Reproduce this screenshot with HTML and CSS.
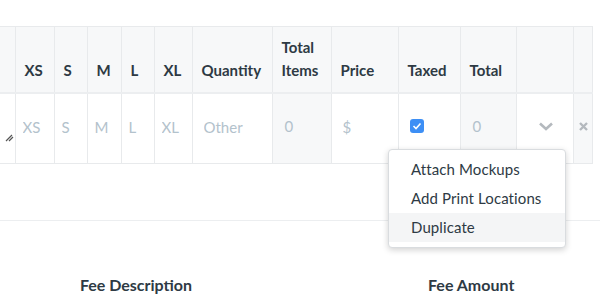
FILE: index.html
```html
<!DOCTYPE html>
<html lang="en">
<head>
  <meta charset="UTF-8" />
  <title>Line Items</title>
  <link rel="stylesheet" href="styles.css">
</head>
<body>
  <div class="items">
    <table class="grid">
      <colgroup>
        <col style="width:15px"><col style="width:39px"><col style="width:33px"><col style="width:34px">
        <col style="width:33px"><col style="width:38px"><col style="width:80px"><col style="width:59px">
        <col style="width:67px"><col style="width:62px"><col style="width:56px"><col style="width:57px">
        <col style="width:19px">
      </colgroup>
      <thead>
        <tr>
          <th></th>
          <th>XS</th>
          <th>S</th>
          <th>M</th>
          <th>L</th>
          <th>XL</th>
          <th>Quantity</th>
          <th>Total<br>Items</th>
          <th>Price</th>
          <th>Taxed</th>
          <th>Total</th>
          <th></th>
          <th></th>
        </tr>
      </thead>
      <tbody>
        <tr>
          <td class="grip">
            <svg width="9" height="8" viewBox="0 0 9 8"><path d="M1 7 L7 1 M4 7 L8 3" stroke="#555" stroke-width="1.2" fill="none"/></svg>
          </td>
          <td><input placeholder="XS"></td>
          <td><input placeholder="S"></td>
          <td><input placeholder="M"></td>
          <td><input placeholder="L"></td>
          <td><input placeholder="XL"></td>
          <td><input class="wide" placeholder="Other"></td>
          <td class="calc">0</td>
          <td><input class="wide" placeholder="$"></td>
          <td class="check">
            <span class="box">
              <svg width="10" height="8" viewBox="0 0 10 8"><path d="M1.5 4 L4 6.5 L8.5 1.5" stroke="#fff" stroke-width="1.6" fill="none"/></svg>
            </span>
          </td>
          <td class="calc">0</td>
          <td class="action">
            <svg width="16" height="9" viewBox="0 0 16 9"><path d="M2 1.5 L8 7 L14 1.5" stroke="#b4b9be" stroke-width="2.6" fill="none"/></svg>
          </td>
          <td class="calc remove">
            <svg width="9" height="9" viewBox="0 0 9 9"><path d="M1 1 L8 8 M8 1 L1 8" stroke="#b4b9be" stroke-width="2.4" fill="none"/></svg>
          </td>
        </tr>
      </tbody>
    </table>

    <div class="menu">
      <div class="menu-item">Attach Mockups</div>
      <div class="menu-item">Add Print Locations</div>
      <div class="menu-item hover">Duplicate</div>
    </div>
  </div>

  <div class="fees">
    <div class="fee-head">
      <span class="fee-desc">Fee Description</span>
      <span class="fee-amt">Fee Amount</span>
    </div>
  </div>
</body>
</html>
```

FILE: styles.css
```css
* {
  box-sizing: border-box;
}

body {
  margin: 0;
  padding: 0;
  background: #fff;
  font-family: Lato, 'Open Sans', sans-serif;
  color: #2e3a44;
  overflow: hidden;
}

.items {
  position: relative;
  padding-top: 26px;
  height: 221px;
  border-bottom: 1px solid #eceef0;
}

.grid {
  border-collapse: collapse;
  table-layout: fixed;
  width: 592px;
}

.grid th,
.grid td {
  border: 1px solid #e8eaec;
  padding: 0;
}

.grid tr > :first-child {
  border-left: none;
}

.grid th {
  background: #f7f8f9;
  height: 66px;
  vertical-align: bottom;
  text-align: left;
  padding: 0 0 10px 9px;
  font-size: 15px;
  font-weight: 700;
  line-height: 23px;
  white-space: nowrap;
  border-bottom: 2px solid #eceef0;
}

.grid td {
  height: 71px;
  vertical-align: middle;
  background: #fff;
  padding-bottom: 4px;
}

.grid input {
  width: 100%;
  border: none;
  outline: none;
  background: transparent;
  font-family: inherit;
  font-size: 15px;
  padding: 0 0 0 7px;
  color: #2e3a44;
}

.grid input.wide {
  padding-left: 11px;
}

.grid input::placeholder {
  color: #b3c2cc;
}

.grid td.calc {
  background: #f7f8f9;
  color: #b3c2cc;
  font-size: 15px;
  padding-left: 12px;
}

.grid td.grip {
  vertical-align: bottom;
  padding: 0 0 21px 5px;
}

.grid td.grip svg,
.grid td.action svg,
.grid td.remove svg {
  display: block;
}

.check {
  padding-left: 11px !important;
}

.box {
  display: flex;
  align-items: center;
  justify-content: center;
  width: 14px;
  height: 14px;
  border-radius: 3px;
  background: #3d8ff5;
}

.grid td.action {
  padding-left: 21px;
}

.grid td.remove {
  padding-left: 5px;
}

.menu {
  position: absolute;
  left: 388px;
  top: 149px;
  width: 178px;
  background: #fff;
  border: 1px solid #d9dcdf;
  border-radius: 4px;
  box-shadow: 0 2px 6px rgba(0,0,0,0.18);
  padding: 5px 0 5px;
}

.menu-item {
  font-size: 15px;
  line-height: 29px;
  padding-left: 22px;
  color: #2e3a44;
  letter-spacing: 0.1px;
}

.menu-item.hover {
  background: #f4f5f6;
}

.fees {
  padding-top: 54px;
}

.fee-head {
  display: flex;
  font-size: 16px;
  font-weight: 700;
}

.fee-desc {
  width: 272px;
  text-align: center;
}

.fee-amt {
  margin-left: 156px;
}
```
